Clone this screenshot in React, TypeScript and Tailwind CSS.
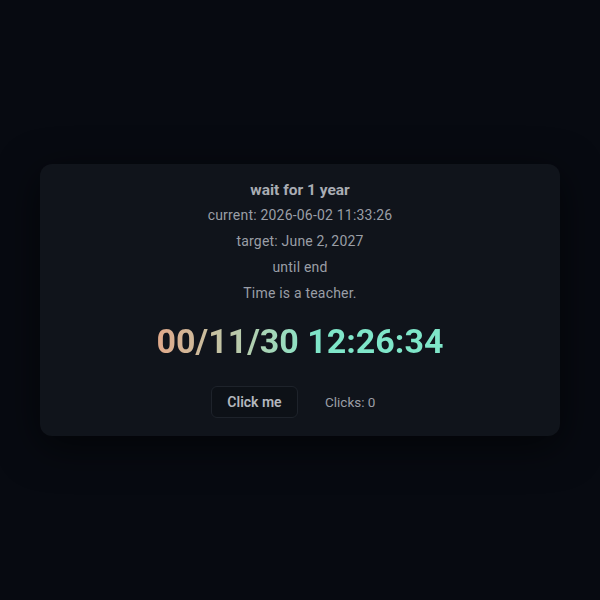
import React, { useState } from "react";

export default function App() {
  const [clicks, setClicks] = useState(0);
  return (
    <div
      className="min-h-screen w-full flex items-center justify-center bg-[#070a11]"
      style={{ fontFamily: "Roboto, 'Liberation Sans', sans-serif" }}
    >
      <div className="w-[520px] rounded-xl bg-[#10141b] shadow-[0_10px_40px_rgba(0,0,0,0.6)] pt-4 pb-[18px] flex flex-col items-center">
        <div className="text-[15.5px] leading-5 font-bold text-[#a9adb4]">wait for 1 year</div>
        <div className="mt-[5px] flex flex-col items-center gap-[6px] text-sm leading-5 text-[#9a9ea6] tracking-[0.2px]">
          <p>current: 2026-06-02 11:33:26</p>
          <p>target: June 2, 2027</p>
          <p>until end</p>
          <p>Time is a teacher.</p>
        </div>
        <div className="mt-[18px] text-[34px] leading-10 font-bold bg-gradient-to-r from-[#e0a98a] via-[#7fe6c9] via-55% to-[#7fe6c9] bg-clip-text text-transparent">
          00/11/30 12:26:34
        </div>
        <div className="mt-[25px] flex items-center gap-[27px]">
          <button
            onClick={() => setClicks(clicks + 1)}
            className="h-8 w-[87px] rounded-md border border-[#1e232b] bg-[#0d1117] text-sm font-semibold text-[#b3b7be]"
          >
            Click me
          </button>
          <span className="w-[64px] text-left text-[13.5px] text-[#9a9ea6]">Clicks: {clicks}</span>
        </div>
      </div>
    </div>
  );
}
